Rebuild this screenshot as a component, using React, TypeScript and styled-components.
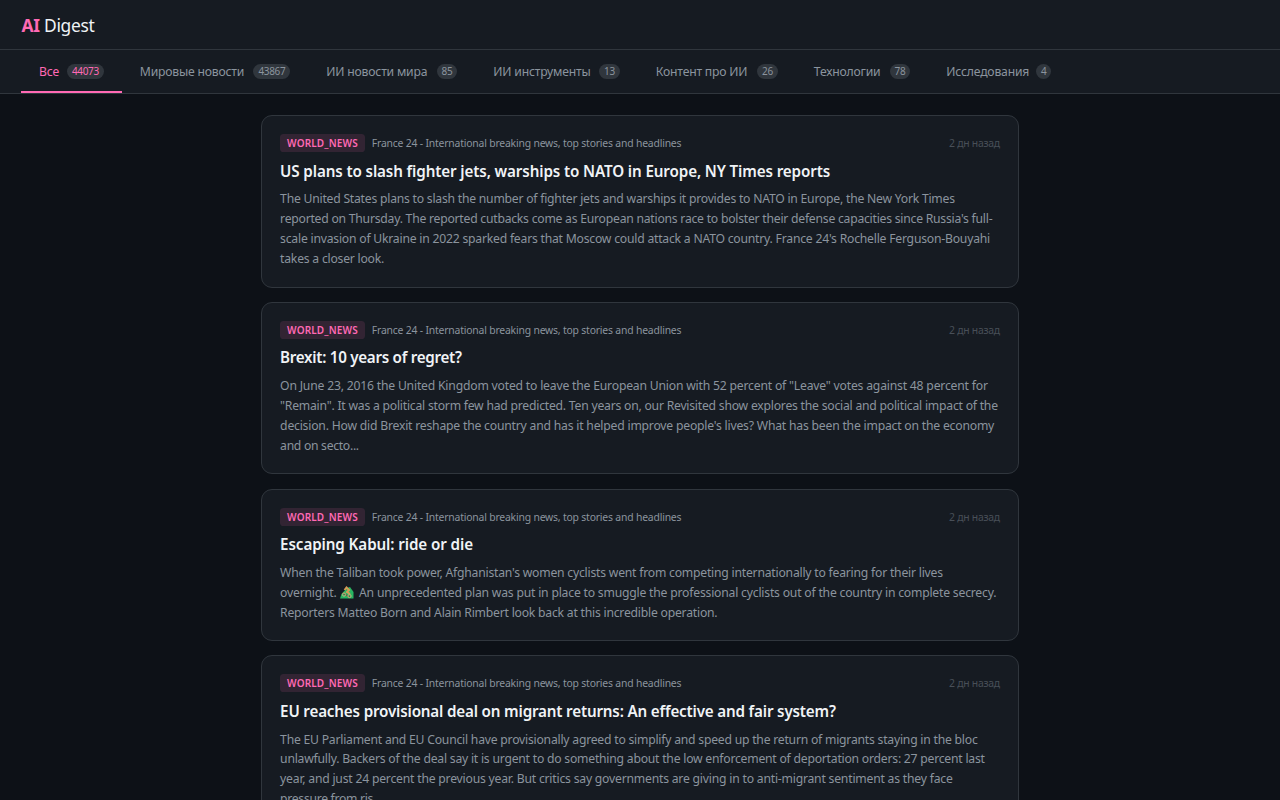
import React from "react";
import styled, { createGlobalStyle } from "styled-components";

const GlobalStyle = createGlobalStyle`
  * { box-sizing: border-box; }
  html, body { margin: 0; height: 100%; overflow: hidden; }
  body {
    background: #0d1117;
    color: #f0f3f6;
    font-family: "Noto Sans", "Open Sans", sans-serif;
  }
`;

const Page = styled.div`
  height: 800px;
  overflow: hidden;
`;

const Header = styled.header`
  height: 50px;
  padding: 0 21.6px;
  display: flex;
  align-items: center;
  background: #161b22;
  border-bottom: 1px solid #30363d;
`;

const Logo = styled.h1`
  margin: 1px 0 0;
  font-size: 17.4px;
  line-height: 24px;
  font-weight: 400;
  letter-spacing: -0.3px;
`;

const Accent = styled.span`
  color: #ff69b4;
  font-weight: 700;
`;

const Tabs = styled.nav`
  height: 44px;
  padding: 0 21px;
  display: flex;
  background: #161b22;
  border-bottom: 1px solid #30363d;
`;

const Tab = styled.button<{ $active?: boolean; $width: number }>`
  width: ${(p) => p.$width}px;
  flex: none;
  padding: 2px 18px 0;
  border: 0;
  border-bottom: 2px solid ${(p) => (p.$active ? "#ff69b4" : "transparent")};
  background: none;
  display: flex;
  align-items: center;
  justify-content: space-between;
  white-space: nowrap;
  font-family: inherit;
  font-size: 12.2px;
  letter-spacing: -0.2px;
  color: ${(p) => (p.$active ? "#ff69b4" : "#8b949e")};
`;

const Count = styled.span`
  height: 15px;
  padding: 0 5px;
  border-radius: 8px;
  background: #30363d;
  font-size: 10px;
  line-height: 15px;
  letter-spacing: -0.36px;
`;

const Feed = styled.main`
  width: 757.8px;
  margin: 21.3px auto 0;
  display: flex;
  flex-direction: column;
  gap: 14.4px;
`;

const Card = styled.article`
  flex: none;
  padding: 18px 18px 17.45px;
  border: 1px solid #30363d;
  border-radius: 11px;
  background: #161b22;
`;

const Meta = styled.div`
  height: 18px;
  display: flex;
  align-items: center;
  gap: 7px;
`;

const Tag = styled.span`
  height: 18px;
  padding: 0 7px;
  border-radius: 3.6px;
  background: rgba(255, 105, 180, 0.12);
  color: #ff69b4;
  font-size: 10px;
  line-height: 18px;
  font-weight: 600;
  letter-spacing: 0.14px;
`;

const Source = styled.span`
  color: #8b949e;
  font-size: 10.4px;
  letter-spacing: -0.19px;
`;

const Time = styled.time`
  margin-left: auto;
  color: #484f58;
  font-size: 10.4px;
  letter-spacing: -0.25px;
`;

const Title = styled.h2<{ $tracking: number }>`
  margin: 7.5px 0 7.2px;
  font-size: 15.2px;
  line-height: 22.5px;
  font-weight: 600;
  letter-spacing: ${(p) => p.$tracking}px;
  white-space: nowrap;
`;

const Summary = styled.p`
  margin: 0;
  color: #8b949e;
  font-size: 12.2px;
  line-height: 19.9px;
`;

const Line = styled.span<{ $tracking: number }>`
  display: block;
  letter-spacing: ${(p) => p.$tracking}px;
  white-space: nowrap;
`;

const Emoji = styled.svg`
  width: 14px;
  height: 13px;
  margin: 0 2px 0 0.5px;
  vertical-align: -2px;
`;

const Biker = () => (
  <Emoji viewBox="0 0 14 13">
    <path d="M0 12.5 1.5 8 7 2 10 1 13.5 6V12.5Z" fill="#27b562" />
    <path d="M4.5 4 6.5 1.5 9 4 7 6 10 8" stroke="#d59b55" strokeWidth="2" fill="none" />
    <path d="M2.5 7 10 11" stroke="#73513b" strokeWidth="1.4" />
    <circle cx="4" cy="8.6" r="1.6" fill="none" stroke="#c6b27e" />
    <circle cx="9.5" cy="10" r="1.6" fill="none" stroke="#c6b27e" />
  </Emoji>
);

const tabs = [
  { label: "Все", count: 44073, width: 100.8 },
  { label: "Мировые новости", count: 43867, width: 186.5 },
  { label: "ИИ новости мира", count: 85, width: 167 },
  { label: "ИИ инструменты", count: 13, width: 162.5 },
  { label: "Контент про ИИ", count: 26, width: 158 },
  { label: "Технологии", count: 78, width: 132.5 },
  { label: "Исследования", count: 4, width: 141 },
];

type Story = {
  title: string;
  tracking: number;
  lines: [React.ReactNode, number][];
};

const stories: Story[] = [
  {
    title: "US plans to slash fighter jets, warships to NATO in Europe, NY Times reports",
    tracking: -0.125,
    lines: [
      ["The United States plans to slash the number of fighter jets and warships it provides to NATO in Europe, the New York Times", -0.234],
      ["reported on Thursday. The reported cutbacks come as European nations race to bolster their defense capacities since Russia's full-", -0.24],
      ["scale invasion of Ukraine in 2022 sparked fears that Moscow could attack a NATO country. France 24's Rochelle Ferguson-Bouyahi", -0.222],
      ["takes a closer look.", -0.23],
    ],
  },
  {
    title: "Brexit: 10 years of regret?",
    tracking: -0.29,
    lines: [
      ['On June 23, 2016 the United Kingdom voted to leave the European Union with 52 percent of "Leave" votes against 48 percent for', -0.202],
      ['"Remain". It was a political storm few had predicted. Ten years on, our Revisited show explores the social and political impact of the', -0.229],
      ["decision. How did Brexit reshape the country and has it helped improve people's lives? What has been the impact on the economy", -0.21],
      ["and on secto...", -0.3],
    ],
  },
  {
    title: "Escaping Kabul: ride or die",
    tracking: -0.1,
    lines: [
      ["When the Taliban took power, Afghanistan's women cyclists went from competing internationally to fearing for their lives", -0.222],
      [<>overnight. <Biker /> An unprecedented plan was put in place to smuggle the professional cyclists out of the country in complete secrecy.</>, -0.21],
      ["Reporters Matteo Born and Alain Rimbert look back at this incredible operation.", -0.225],
    ],
  },
  {
    title: "EU reaches provisional deal on migrant returns: An effective and fair system?",
    tracking: -0.175,
    lines: [
      ["The EU Parliament and EU Council have provisionally agreed to simplify and speed up the return of migrants staying in the bloc", -0.228],
      ["unlawfully. Backers of the deal say it is urgent to do something about the low enforcement of deportation orders: 27 percent last", -0.23],
      ["year, and just 24 percent the previous year. But critics say governments are giving in to anti-migrant sentiment as they face", -0.213],
      ["pressure from ris...", -0.3],
    ],
  },
];

export default function App() {
  return (
    <Page>
      <GlobalStyle />
      <Header>
        <Logo><Accent>AI</Accent> Digest</Logo>
      </Header>
      <Tabs>
        {tabs.map((t, i) => (
          <Tab key={t.label} $active={i === 0} $width={t.width}>
            {t.label}
            <Count>{t.count}</Count>
          </Tab>
        ))}
      </Tabs>
      <Feed>
        {stories.map((s) => (
          <Card key={s.title}>
            <Meta>
              <Tag>WORLD_NEWS</Tag>
              <Source>France 24 - International breaking news, top stories and headlines</Source>
              <Time>2 дн назад</Time>
            </Meta>
            <Title $tracking={s.tracking}>{s.title}</Title>
            <Summary>
              {s.lines.map(([text, tracking], i) => (
                <Line key={i} $tracking={tracking}>{text}</Line>
              ))}
            </Summary>
          </Card>
        ))}
      </Feed>
    </Page>
  );
}
